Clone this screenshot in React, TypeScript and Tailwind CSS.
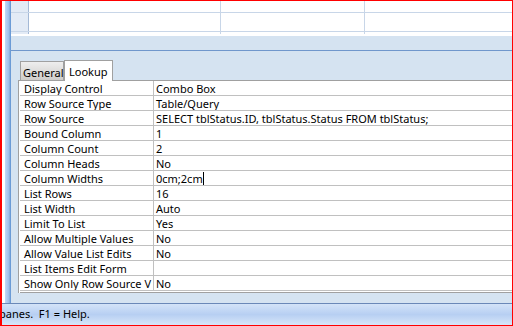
import React from 'react';

const rows: [string, string][] = [
  ['Display Control', 'Combo Box'],
  ['Row Source Type', 'Table/Query'],
  ['Row Source', 'SELECT tblStatus.ID, tblStatus.Status FROM tblStatus;'],
  ['Bound Column', '1'],
  ['Column Count', '2'],
  ['Column Heads', 'No'],
  ['Column Widths', '0cm;2cm'],
  ['List Rows', '16'],
  ['List Width', 'Auto'],
  ['Limit To List', 'Yes'],
  ['Allow Multiple Values', 'No'],
  ['Allow Value List Edits', 'No'],
  ['List Items Edit Form', ''],
  ['Show Only Row Source V', 'No'],
];

// 그리드 행 (위쪽 테이블 디자인 영역)
function GridRow({ h }: { h: string }) {
  return (
    <div className={`flex ${h} border-b border-[#c8d6e8]`}>
      <div className="w-[18px] bg-[#e3ebf6] border-r border-[#a4b9d6]" />
      <div className="w-[192px] bg-white border-r border-[#c8d6e8]" />
      <div className="w-[144px] bg-white border-r border-[#c8d6e8]" />
      <div className="flex-1 bg-white" />
    </div>
  );
}

export default function App() {
  return (
    <div
      className="w-[513px] h-[326px] flex flex-col bg-white border-l-2 border-t border-r border-b border-[#ff0000] overflow-hidden text-[11px] text-black"
      style={{ fontFamily: '"Noto Sans", "Open Sans", sans-serif' }}
    >
      <div className="flex flex-1 min-h-0">
        <div className="w-[3px] bg-white" />
        <div className="w-[5px] bg-gradient-to-r from-[#c3d8f5] to-[#9dbde9] border-r border-[#8fb0de]" />
        <div className="w-[1px] bg-[#6b9bd6]" />
        <div className="flex-1 flex flex-col min-w-0">
          {/* 위쪽 그리드 */}
          <div className="h-[35px] flex flex-col">
            <GridRow h="h-[12px]" />
            <GridRow h="h-[19px]" />
            <div className="flex h-[2px]">
              <div className="w-[18px] bg-[#e3ebf6] border-r border-[#a4b9d6]" />
              <div className="w-[192px] bg-white border-r border-[#c8d6e8]" />
              <div className="w-[144px] bg-white border-r border-[#c8d6e8]" />
              <div className="flex-1 bg-white" />
            </div>
          </div>
          <div className="h-[15px] bg-[#d5e3f1] border-b border-[#7097cc]" />

          {/* 속성 패널 */}
          <div className="flex-1 bg-[#d5e3f1] pt-[9px] pl-[7px] flex flex-col">
            <div className="flex items-end h-[20px] ml-[2px]">
              <div className="h-[19px] w-[44px] border border-b-0 border-[#a0a0a0] bg-gradient-to-b from-[#eeeeee] to-[#cfcdca] flex items-center pl-[2px] pt-[2px] leading-none">
                General
              </div>
              <div className="h-[21px] w-[49px] border border-b-0 border-[#a0a0a0] bg-white flex items-center pl-[4px] leading-none -mb-[1px] relative z-10">
                Lookup
              </div>
            </div>
            <div className="border-t border-l border-[#a0a0a0] bg-white pl-[1px]">
              {rows.map(([k, v]) => (
                <div key={k} className="flex h-[15px] border-b border-[#c0c0c0]">
                  <div className="w-[134px] border-r border-[#c0c0c0] pl-[4px] pt-[1px] leading-[14px] whitespace-nowrap overflow-hidden">{k}</div>
                  <div className="flex-1 pl-[2px] pt-[1px] leading-[14px] whitespace-nowrap overflow-hidden flex">
                    {v}
                    {k === 'Column Widths' && <span className="w-[1px] h-[13px] bg-black" />}
                  </div>
                </div>
              ))}
              <div className="h-[2px] border-b border-[#a0a0a0]" />
            </div>
          </div>
        </div>
      </div>

      {/* 상태 표시줄 */}
      <div className="h-[22px] border-t border-[#6a88b8] bg-gradient-to-b from-[#d3e3f8] via-[#b7cff2] to-[#d7e6f9] flex items-center whitespace-pre text-[11px]">
        <span className="-ml-[3px]">panes.  F1 = Help.</span>
      </div>
    </div>
  );
}
